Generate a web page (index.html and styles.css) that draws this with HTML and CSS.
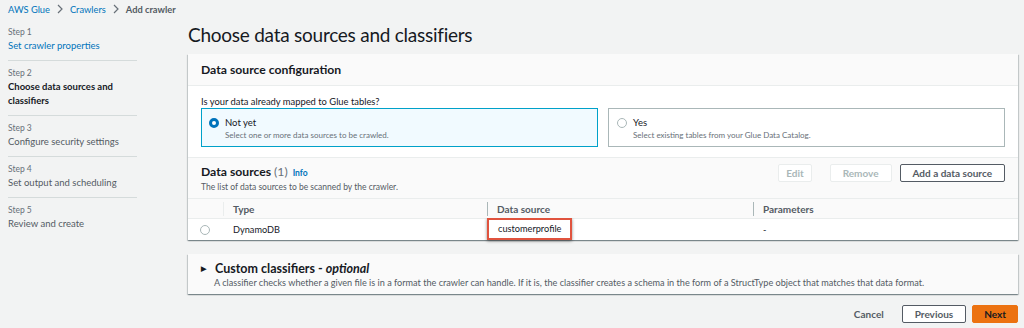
FILE: index.html
```html
<!DOCTYPE html>
<html lang="en">
  <head>
    <meta charset="UTF-8" />
    <meta name="viewport" content="width=device-width, initial-scale=1.0" />
    <title>Add crawler</title>
    <link rel="stylesheet" href="styles.css">
  </head>

  <body>
    <div class="crumbs">
      <a href="#">AWS Glue</a>
      <svg class="chev" viewBox="0 0 6 10"><path d="M1 1l4 4-4 4" /></svg>
      <a href="#">Crawlers</a>
      <svg class="chev" viewBox="0 0 6 10"><path d="M1 1l4 4-4 4" /></svg>
      <span class="here">Add crawler</span>
    </div>

    <div class="layout">
      <nav class="steps">
        <div class="step">
          <div class="step-no">Step 1</div>
          <a href="#" class="step-title link">Set crawler properties</a>
        </div>
        <div class="step">
          <div class="step-no">Step 2</div>
          <div class="step-title current">Choose data sources and<br/>classifiers</div>
        </div>
        <div class="step">
          <div class="step-no">Step 3</div>
          <div class="step-title">Configure security settings</div>
        </div>
        <div class="step">
          <div class="step-no">Step 4</div>
          <div class="step-title">Set output and scheduling</div>
        </div>
        <div class="step last">
          <div class="step-no">Step 5</div>
          <div class="step-title">Review and create</div>
        </div>
      </nav>

      <main class="main">
        <h1>Choose data sources and classifiers</h1>

        <section class="panel">
          <div class="panel-head">
            <h2>Data source configuration</h2>
          </div>
          <div class="panel-body">
            <div class="question">Is your data already mapped to Glue tables?</div>
            <div class="tiles">
              <label class="tile selected">
                <span class="radio on"></span>
                <span class="tile-text">
                  <span class="tile-title">Not yet</span>
                  <span class="tile-desc">Select one or more data sources to be crawled.</span>
                </span>
              </label>
              <label class="tile">
                <span class="radio"></span>
                <span class="tile-text">
                  <span class="tile-title">Yes</span>
                  <span class="tile-desc">Select existing tables from your Glue Data Catalog.</span>
                </span>
              </label>
            </div>
          </div>

          <div class="ds-head">
            <div class="ds-titles">
              <h2>Data sources <span class="count">(1)</span> <a href="#" class="info">Info</a></h2>
              <div class="ds-desc">The list of data sources to be scanned by the crawler.</div>
            </div>
            <div class="actions">
              <button class="btn disabled narrow">Edit</button>
              <button class="btn disabled">Remove</button>
              <button class="btn">Add a data source</button>
            </div>
          </div>

          <table class="grid">
            <tr>
              <th class="c-sel"></th>
              <th class="c-type"><span class="divider light"></span>Type</th>
              <th class="c-src"><span class="divider"></span>Data source</th>
              <th class="c-par"><span class="divider"></span>Parameters</th>
            </tr>
            <tr>
              <td class="c-sel"><span class="radio"></span></td>
              <td class="c-type">DynamoDB</td>
              <td class="c-src"><span class="mark">customerprofile</span></td>
              <td class="c-par">-</td>
            </tr>
          </table>
        </section>

        <section class="panel expander">
          <div class="exp-title"><span class="caret">&#9654;</span>Custom classifiers - <em>optional</em></div>
          <div class="exp-desc">A classifier checks whether a given file is in a format the crawler can handle. If it is, the classifier creates a schema in the form of a StructType object that matches that data format.</div>
        </section>

        <div class="footer">
          <button class="btn link-btn">Cancel</button>
          <button class="btn">Previous</button>
          <button class="btn primary">Next</button>
        </div>
      </main>
    </div>
  </body>
</html>
```

FILE: styles.css
```css
* { box-sizing: border-box; }
body { margin: 0; background: #f2f3f3; color: #16191f; font-family: Lato, "Open Sans", sans-serif; }
a { color: #0073bb; text-decoration: none; }

.crumbs { display: flex; align-items: center; gap: 7px; height: 20px; padding: 0 8px 2px; font-size: 9.3px; }
.crumbs .chev { width: 6px; height: 10px; fill: none; stroke: #687078; stroke-width: 1.2; }
.crumbs .here { color: #545b64; font-weight: bold; }

.layout { display: grid; grid-template-columns: 188px 1fr; padding-right: 6px; }

.steps { padding-left: 8px; }
.step { width: 129px; padding: 6px 0 7px; border-bottom: 1px solid #d5dbdb; }
.step.last { border-bottom: none; }
.step-no { font-size: 8.5px; line-height: 12px; color: #687078; }
.step-title { display: block; margin-top: 1px; font-size: 9.5px; line-height: 14px; color: #545b64; }
.step-title.link { color: #0073bb; }
.step-title.current { color: #16191f; font-weight: bold; }

h1 { margin: 0 0 4px; font-size: 19px; letter-spacing: -0.25px; line-height: 30px; font-weight: normal; }
h2 { margin: 0; font-size: 12.2px; font-weight: bold; }

.panel { background: #fff; box-shadow: 0 1px 1px 0 rgba(0,28,36,.3), 1px 1px 1px 0 rgba(0,28,36,.15), -1px 1px 1px 0 rgba(0,28,36,.15); }
.panel-head { height: 32px; padding: 0 13px; display: flex; align-items: center; background: #fafafa; border-bottom: 1px solid #eaeded; }
.panel-body { padding: 10px 13px 10px; border-bottom: 1px solid #eaeded; }
.question { font-size: 9.4px; line-height: 12px; }
.tiles { display: grid; grid-template-columns: 1fr 1fr; gap: 10px; }
.tile { display: flex; gap: 6px; height: 39px; padding: 7px 8px; border: 1px solid #aab7b8; }
.tile.selected { background: #f1faff; border-color: #00a1c9; padding-left: 7px; }
.tile-text { display: flex; flex-direction: column; }
.tile-title { font-size: 9.5px; line-height: 13px; }
.tile-desc { font-size: 8px; line-height: 12px; color: #687078; }

.radio { display: inline-block; width: 10px; height: 10px; margin-top: 2px; border: 1px solid #aab7b8; border-radius: 50%; background: #fff; flex: none; }
.radio.on { border: 3px solid #0073bb; }

.ds-head { display: flex; justify-content: space-between; align-items: flex-start; height: 40px; padding: 6px 13px 0; background: #fafafa; }
.ds-head h2 { line-height: 16px; }
.ds-head .count { color: #687078; font-weight: normal; }
.ds-head .info { font-size: 8.5px; margin-left: 2px; }
.ds-desc { font-size: 8.5px; line-height: 12px; color: #545b64; }
.actions { display: flex; gap: 8px; }

.btn { height: 18px; padding: 0 12px; border: 1px solid #545b64; background: #fff; color: #545b64; font-family: inherit; font-size: 10px; font-weight: bold; border-radius: 2px; }
.btn.disabled { border-color: #eaeded; color: #aab7b8; }
.btn.narrow { padding: 0 7px; margin-right: 10px; }

.grid { width: 100%; border-collapse: collapse; font-size: 9.2px; }
.grid th { height: 20px; padding: 0 0 0 10px; background: #fafafa; border-top: 1px solid #eaeded; border-bottom: 1px solid #eaeded; color: #545b64; font-size: 10px; text-align: left; position: relative; }
.grid td { height: 21px; padding: 0 0 0 10px; }
.grid .c-sel { width: 35px; padding-left: 12px; }
.grid .c-type { width: 264px; }
.grid .c-src { width: 266px; }
.grid td.c-src { padding-left: 0; }
.grid td .radio { margin-top: 0; vertical-align: middle; }
.divider { position: absolute; left: 0; top: 3px; height: 14px; border-left: 1px solid #aab7b8; }
.divider.light { border-color: #eaeded; }
.mark { display: inline-block; height: 22px; line-height: 18px; margin-top: -1px; padding: 0 9px; border: 2px solid #e0533e; box-shadow: 0 1px 3px rgba(0,0,0,.45); color: #16191f; }

.expander { margin-top: 14px; height: 40px; padding: 7px 13px 0; background: #fafafa; }
.exp-title { font-size: 12.5px; font-weight: bold; line-height: 14px; }
.exp-title em { font-style: italic; }
.caret { display: inline-block; width: 14px; font-size: 7px; vertical-align: 2px; }
.exp-desc { margin-top: 1px; padding-left: 13px; font-size: 9.15px; line-height: 12px; color: #545b64; }

.footer { display: flex; justify-content: flex-end; align-items: center; gap: 6px; margin-top: 11px; }
.btn.link-btn { border: none; background: none; }
.btn.primary { background: #ec7211; border-color: #ec7211; color: #16191f; padding: 0 11px; }
```
